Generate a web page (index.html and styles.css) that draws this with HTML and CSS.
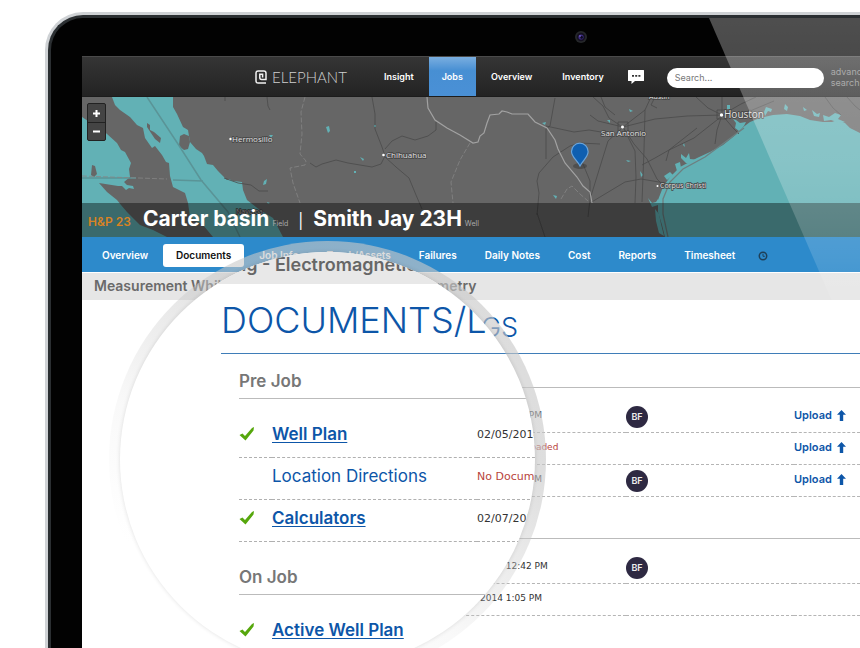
FILE: index.html
```html
<!DOCTYPE html>
<html lang="en">
<head>
<meta charset="utf-8">
<title>Elephant – Documents</title>
<link rel="stylesheet" href="styles.css">
</head>
<body>
<div class="laptop">
  <div class="bezel">
    <svg class="camera" width="14" height="14" viewBox="0 0 14 14" aria-hidden="true">
      <circle cx="7" cy="7" r="6" fill="#25272a"/><circle cx="7" cy="7" r="4.2" fill="#14101f"/>
      <circle cx="7" cy="7" r="2.6" fill="#3b2a80"/><circle cx="7.6" cy="7.4" r="1.3" fill="#0d0a1c"/><circle cx="6" cy="6" r=".8" fill="#8a78d8"/>
    </svg>
    <div class="screen">
      <header class="topbar">
        <a class="brand" href="#">
          <svg width="12" height="14" viewBox="0 0 12 14" aria-hidden="true"><path d="M11 13H3.200Q1 13 1 10.800V3.200Q1 1 3.200 1H8.800Q11 1 11 3.200V9.500H6.600Q4.800 9.500 4.800 7.800V4.200H7.600V7.500" fill="none" stroke="#f2f2f2" stroke-width="1.500"/></svg>
          <span class="wordmark">ELEPHANT</span>
        </a>
        <nav class="mainnav">
          <a href="#">Insight</a>
          <a href="#" class="active">Jobs</a>
          <a href="#">Overview</a>
          <a href="#">Inventory</a>
        </nav>
        <button class="chat" aria-label="Messages">
          <svg width="18" height="16" viewBox="0 0 18 16"><path d="M1.500 1H16.500Q17 1 17 1.500V11.500Q17 12 16.500 12H8L4.500 15V12H1.500Q1 12 1 11.500V1.500Q1 1 1.500 1Z" fill="#fff"/><path d="M5 6.800h2M8.200 6.800h2M11.400 6.800h2" stroke="#333" stroke-width="1.800"/></svg>
        </button>
        <input class="search" type="search" placeholder="Search..." aria-label="Search">
        <a class="advanced" href="#">advanced<br>search</a>
      </header>

      <section class="map">
        <svg class="mapart" viewBox="82 97 778 140" preserveAspectRatio="xMinYMin slice" aria-hidden="true">
          <rect x="82" y="97" width="2000" height="600" fill="#666"/>
          <g fill="#62b1b5">
            <path d="M82 117L88 121 97 127 101 128 107 134 117 143 121 150 125 152 131 163 129 169 130 177 124 182 127 185 133 186 134 189 129 188 126 190 122 186 118 186 99 183 107 192 117 200 121 205 127 212 140 225 153 230 167 237H82Z"/>
            <path d="M112 97L115 105 120 110 130 117 137 125 143 128 145 138 152 148 155 146 162 155 166 162 169 163 170 176 173 187 185 193 188 203 190 217 203 225 213 237H283L273 218 260 210 247 200 243 190 242 182 233 181 229 179 227 180 218 171 213 165 207 164 204 156 202 153 196 149 190 142 188 130 183 127 177 114 173 107V97Z"/>
            <path d="M860 133L850 128 845 123 837 120 832 122 823 122 810 120 800 116 787 114 773 115 760 118 750 122 742 128 733 137 723 145 710 152 697 158 680 167 670 177 663 187 658 200 658 212 662 225 665 237H2000V133Z"/>
            <path d="M733 119l3 1 4 3 6-1-2 4-5 5-4-3 1-5zM681 154l5 4 3-5 1 6 10 1-8 4-6-1-5-5zM675 164l5-2 1 6-4 3zM664 176l6-4 3 3-6 5zM648 198l4 5 4-1 2-3v6l-6 2zM655 209l4 5 2 10 3 12-5-3-3-12zM766 107l6 2-1 3-3-1-3 5-1-4zM785 104l3 3-1 4-3-2zM803 107l4 3-3 1zM812 110l5 4 3-1-1 4-5-1zM823 115l6 2 6-4 6 2-3 4 7 3-5 1-9-3-7 1z"/>
            <path d="M326 127l3-1 1 5-2 2zM360 157l4 2-1 2zM354 171h2v2h-2zM374 125h2v2h-2zM542 123l4-1-1 3zM553 195l4 1-1 3zM264 181l3-2-1 5-3 1zM269 135h4l-2 3zM267 202l3 1-2 1zM626 160l5 1-3 1zM629 109l4 2-3 1zM607 120h3v3zM640 171l3 4-2 2zM727 105h3v4h-3zM684 143l1 4-2-2z"/>
          </g>
          <g fill="#666">
            <path d="M147 123l3 2v5l4 2 7 6-1 5-5-4-8-12zM180 136l4-2 5 2 1 6-2 7-4 1-5-4zM92 165l3 1 2 8-3 3-3-2z"/>
          </g>
          <g class="grid"><path d="M147 97L178 144 201 180 228 212 240 237M82 178h54M173 180l30 1"/></g>
          <g class="road">
            <path d="M267 97l1 9 2 4M225 97v4M224 178l14 5 13 2 8 6 9 0M372 97l3 17 0 15 7 18 3 9-4 8-9 3-24-4-12-3-14 4-6 3-6-4M385 157l11 10 13 11 7 17 6 14M385 149l7-8 10-5 13 4 13-4 8-6v-8M555 98l-5 28-4 3 0 30M546 126l14 3 14 3 15-2 12 2M600 144l-20-1-10 3-17 11-14 16-2 8 2 12-2 22M583 164l7 17 0 18-2 18M545 237l-8-24M593 97l10 9 6 12 12 8M623 127l9-7 13-10 6-13M623 127l32-8 32-3 35-1M623 127l-25-6-8-6M623 127l11 17 13 15 10 20 8 8M623 127l-15 14-9 29-8 26M623 127l12 24 1 26-1 26M590 203l35-21 16-3 24 4M642 165l13-7 14-8 25-12 28-22M669 150l28-22M669 150l-3 11M722 115l-14-7-12-11M722 115l0-18M722 115l19-11 15-7M722 115l12 14 5 5M722 115l-5 15-2 14M722 115l28-4 24-10M645 110l-1 40-2 52M655 97l-4 8 6 3M825 97l8 11 8 7M847 97l8 9 5 4M601 97l4 10 10 8"/>
            <path d="M717 110h10v9h-10zM618 122h10v10h-10z"/>
          </g>
          <path class="river dashed" d="M305 97l-4 15 1 22-2 20 6 7-1 4-15 3 3 15 7 20M470 143l-10 17-9 22 2 21M82 176l85 3M561 199l6-10 5-3 8 8 8 7"/>
          <path class="river" d="M427 97l1 11 7 12 12 8 13 7 13 8 5-1 2-6 4-3 3-10 3-8 9-1 3-3 5 1 5 2 10 0 6 0 7 8 12 6 8 12 3 9 7 14 12 14 6 9 7 6 2 11"/>
          <path class="shore" d="M744 128l-16 12-23 17-22 12-13 13-7 17 0 15 5 23"/>
          <g fill="#fff"><circle cx="230.500" cy="139" r="1.200"/><circle cx="383.500" cy="155" r="1.300"/><circle cx="622.500" cy="127" r="1.500"/><circle cx="721.500" cy="115" r="1.700"/><circle cx="657.500" cy="186" r="1"/></g>
          <g class="place">
            <text x="232" y="142">Hermosillo</text><text x="386" y="158">Chihuahua</text><text x="601" y="136">San Antonio</text>
            <text x="724" y="118" class="big">Houston</text><text x="660" y="188" class="small">Corpus Christi</text><text x="649" y="99" class="small">Austin</text><text x="236" y="214" class="small dim">Navojoa</text>
          </g>
          <ellipse cx="580" cy="166" rx="7" ry="3" fill="#333" opacity=".45"/>
          <path d="M580 166C577 160 571.500 157 571.500 151.500a8.300 8.300 0 0 1 16.600 0C588.100 157 583 160 580 166Z" fill="#0f5fb0" stroke="#6aa5dc" stroke-width="1.200"/>
        </svg>
        <div class="zoomer">
          <button aria-label="Zoom in"><svg width="9" height="9" viewBox="0 0 9 9"><path d="M1 4.500h7M4.500 1v7" stroke="#fff" stroke-width="2"/></svg></button>
          <button aria-label="Zoom out"><svg width="9" height="9" viewBox="0 0 9 9"><path d="M1 4.500h7" stroke="#fff" stroke-width="2"/></svg></button>
        </div>
        <div class="jobtitle">
          <span class="rig">H&amp;P 23</span>
          <strong>Carter basin</strong><small>Field</small>
          <span class="bar">|</span>
          <strong>Smith Jay 23H</strong><small>Well</small>
        </div>
      </section>

      <nav class="tabs">
        <a href="#">Overview</a>
        <a href="#" class="current">Documents</a>
        <a href="#">Job Info</a>
        <a href="#">Truck/Assets</a>
        <a href="#">Failures</a>
        <a href="#">Daily Notes</a>
        <a href="#">Cost</a>
        <a href="#">Reports</a>
        <a href="#">Timesheet</a>
        <a href="#" class="history" aria-label="History"><svg width="10" height="10" viewBox="0 0 10 10"><circle cx="5" cy="5" r="3.700" fill="none" stroke="#1f4058" stroke-width="1.500"/><path d="M5 2.800V5.300H6.800" fill="none" stroke="#1f4058"/></svg></a>
      </nav>
      <div class="band">Measurement While Drilling - Electromagnetic Telemetry</div>

      <main class="content">
        <h1>DOCUMENTS/LOGS</h1>
        <section>
          <table>
            <colgroup><col class="c-name"><col class="c-date"><col class="c-user"><col></colgroup>
            <tr><td></td><td>02/05/2014 9:20 PM</td><td><span class="avatar">BF</span></td><td><a class="upload" href="#">Upload <svg width="9" height="11" viewBox="0 0 9 11"><path d="M4.500 0L9 4.800H6.200V11H2.800V4.800H0Z" fill="#0d56a8"/></svg></a></td></tr>
            <tr><td></td><td class="missing">No Document Uploaded</td><td></td><td><a class="upload" href="#">Upload <svg width="9" height="11" viewBox="0 0 9 11"><path d="M4.500 0L9 4.800H6.200V11H2.800V4.800H0Z" fill="#0d56a8"/></svg></a></td></tr>
            <tr><td></td><td>02/07/2014 3:15 PM</td><td><span class="avatar">BF</span></td><td><a class="upload" href="#">Upload <svg width="9" height="11" viewBox="0 0 9 11"><path d="M4.500 0L9 4.800H6.200V11H2.800V4.800H0Z" fill="#0d56a8"/></svg></a></td></tr>
          </table>
        </section>
        <section>
          <table>
            <colgroup><col class="c-name"><col class="c-date"><col class="c-user"><col></colgroup>
            <tr><td></td><td>02/10/2014 12:42 PM</td><td><span class="avatar">BF</span></td><td></td></tr>
            <tr><td></td><td>02/12/2014 1:05 PM</td><td></td><td></td></tr>
          </table>
        </section>
      </main>

      <aside class="lens">
        <div class="lensview">
          <div class="lensband">Drilling - Electromagnetic Telemetry</div>
          <div class="lenstitle">DOCUMENTS/LOGS</div>
          <section>
            <h3>Pre Job</h3>
            <table>
              <colgroup><col class="l-tick"><col class="l-name"><col></colgroup>
              <tr><td><svg class="tick" width="16" height="14" viewBox="0 0 16 14"><path d="M.5 8L3.500 6.500 6 9 13 1 15 0 14.500 3.500 6.500 13.500Z" fill="#56a70c"/></svg></td><td><a class="done" href="#">Well Plan</a></td><td>02/05/2014</td></tr>
              <tr><td></td><td><a href="#">Location Directions</a></td><td class="missing">No Document</td></tr>
              <tr><td><svg class="tick" width="16" height="14" viewBox="0 0 16 14"><path d="M.5 8L3.500 6.500 6 9 13 1 15 0 14.500 3.500 6.500 13.500Z" fill="#56a70c"/></svg></td><td><a class="done" href="#">Calculators</a></td><td>02/07/2014</td></tr>
            </table>
          </section>
          <section>
            <h3>On Job</h3>
            <table>
              <colgroup><col class="l-tick"><col class="l-name"><col></colgroup>
              <tr><td><svg class="tick" width="16" height="14" viewBox="0 0 16 14"><path d="M.5 8L3.500 6.500 6 9 13 1 15 0 14.500 3.500 6.500 13.500Z" fill="#56a70c"/></svg></td><td><a class="done" href="#">Active Well Plan</a></td><td></td></tr>
            </table>
          </section>
        </div>
      </aside>
    </div>
    <div class="glare"></div>
  </div>
</div>
</body>
</html>
```
FILE: styles.css
```css
* { box-sizing: border-box; }
body {
  margin: 0;
  height: 100vh;
  overflow: hidden;
  background: #fff;
  font-family: Inter, "Open Sans", sans-serif;
}
a { color: inherit; text-decoration: none; }
button { border: 0; padding: 0; background: none; display: flex; align-items: center; justify-content: center; }
h1, h3 { margin: 0; }

/* laptop frame */
.laptop {
  margin: 12px 0 0 45px;
  min-height: 100vh;
  padding: 3px 0 0 3px;
  border-radius: 38px 0 0 0;
  background: #cfd2d5;
  display: flex;
}
.bezel {
  position: relative;
  flex: 1;
  min-width: 0;
  border: solid #2b2f32;
  border-width: 3px 0 0 3px;
  border-radius: 35px 0 0 0;
  padding: 38px 0 0 31px;
  background: #020202;
  display: flex;
}
.camera { position: absolute; left: 523px; top: 12px; }
.screen {
  position: relative;
  flex: 1;
  min-width: 0;
  background: #fff;
}
.glare {
  position: absolute;
  inset: 0 0 auto 0;
  height: 283px;
  background: linear-gradient(rgba(255,255,255,.3), rgba(255,255,255,.24) 50%, rgba(255,255,255,.14) 85%, rgba(255,255,255,.08));
  clip-path: polygon(658px 0, 100% 0, 100% 100%, 781px 100%);
  pointer-events: none;
}

/* top bar */
.topbar {
  display: flex;
  align-items: center;
  height: 41px;
  overflow: hidden;
  border-top: 1px solid #4a4a4a;
  border-bottom: 1px solid #1c1c1c;
  background: linear-gradient(#353535, #232323);
  color: #fff;
}
.brand { display: flex; align-items: center; gap: 5px; flex: none; width: 287px; padding-left: 173px; }
.brand svg { flex: none; }
.wordmark { font: 300 15px/20px Lato, "Liberation Sans", sans-serif; color: #d0d0d0; }
.mainnav { display: flex; align-self: stretch; flex: none; }
.mainnav a { display: flex; align-items: center; padding: 0 15px; font-size: 9px; font-weight: 600; }
.mainnav .active { background: linear-gradient(#7aaee0, #478fd3 35%, #4a90d6); padding: 0 13px; }
.chat { flex: none; margin: 0 22px 0 8px; }
.search {
  appearance: none;
  flex: none;
  width: 157px;
  height: 20px;
  margin-top: 2px;
  border: 0;
  border-radius: 10px;
  padding: 0 8px;
  background: #fff;
  font: 9px/20px Inter, sans-serif;
}
.search::placeholder { color: #777; opacity: 1; }
.advanced { flex: none; margin-left: 7px; font-size: 9px; line-height: 11px; color: #8d8d8d; }

/* map */
.map { position: relative; height: 140px; overflow: hidden; background: #666; }
.mapart { display: block; width: 100%; height: 100%; }
.mapart .road { fill: none; stroke: #4a4a4a; stroke-width: .8; }
.mapart .grid { fill: none; stroke: #5a9497; stroke-width: 1.5; }
.mapart .river { fill: none; stroke: #a2a2a2; stroke-width: 1.2; }
.mapart .dashed { stroke: #858585; stroke-width: .8; stroke-dasharray: 5 2; }
.mapart .shore { fill: none; stroke: #6d7f80; stroke-width: 1.3; }
.place { font: 8px "Open Sans", sans-serif; fill: #e2e2e2; stroke: #444; stroke-width: 1.5px; paint-order: stroke; }
.place .big { font-size: 10px; }
.place .small { font-size: 7px; }
.place .dim { fill: #bbb; }
.zoomer { position: absolute; left: 5px; top: 6px; width: 19px; border: 1px solid #222; border-radius: 2px; background: #444; }
.zoomer button { width: 100%; height: 18px; }
.zoomer button + button { border-top: 1px solid #222; }
.jobtitle {
  position: absolute;
  inset: auto 0 0 0;
  height: 34px;
  padding: 0 6px;
  background: rgba(0,0,0,.4);
  color: #fff;
  font-size: 20px;
  line-height: 32px;
  white-space: nowrap;
  display: flex;
  align-items: baseline;
}
.rig { width: 55px; font-size: 12px; font-weight: 600; color: #d98324; }
.jobtitle strong { font-size: 21px; font-weight: 700; }
.jobtitle small { margin-left: 3px; font-size: 7px; color: #aaa; }
.bar { margin: 0 10px; font-size: 15px; }

/* tabs */
.tabs {
  display: flex;
  align-items: center;
  height: 35px;
  padding: 2px 6px 0;
  background: #2d8acb;
  color: #fff;
  font-size: 10px;
  font-weight: 600;
  white-space: nowrap;
}
.tabs a { padding: 0 14px; line-height: 23px; display: flex; align-items: center; }
.tabs .current { margin: 0 1px; padding: 0 13px; border-radius: 3px; background: #fff; color: #111; }
.tabs .history { padding: 0 9px; }
.band {
  height: 28px;
  border-top: 1px solid #fff;
  padding-left: 12px;
  background: #e6e6e6;
  color: #6a6a6a;
  font-size: 14px;
  font-weight: 600;
  line-height: 25px;
  white-space: nowrap;
}

/* documents list */
.content { margin-left: 139px; }
.content h1 { padding: 3px 0 0 41px; border-bottom: 1px solid #3f7db8; font-size: 27px; font-weight: 300; line-height: 50px; color: #0d56a8; }
.content section { padding-top: 33px; }
.content section + section { padding-top: 41px; }
table { width: 100%; table-layout: fixed; border-collapse: separate; border-spacing: 0; }
td { padding: 0; white-space: nowrap; }
.content table { padding-top: 13px; border-top: 1px solid #bbb; font: 9px "DejaVu Sans", sans-serif; color: #333; }
.content td { height: 32px; padding-bottom: 3px; border-bottom: 1px dashed #b5b5b5; }
.c-name { width: 230px; }
.c-date { width: 175px; }
.c-user { width: 168px; }
.missing { color: #b8443c; }
.avatar {
  display: block;
  width: 22px;
  height: 22px;
  margin-top: 4px;
  border-radius: 50%;
  background: #2e2942;
  color: #eee;
  font: 600 9px/22px Inter, sans-serif;
  text-align: center;
}
.upload { display: flex; align-items: center; gap: 5px; font: 600 11px/14px Inter, sans-serif; color: #0d56a8; }

/* magnifier */
.lens {
  position: absolute;
  left: 27px;
  top: 185px;
  width: 437px;
  height: 437px;
  padding: 11px;
  border-radius: 50%;
  background: linear-gradient(35deg, rgba(205,205,205,0) 20%, rgba(205,205,205,.12) 38%, rgba(200,200,200,.6) 68%, rgba(200,200,200,.65));
}
.lensview {
  width: 100%;
  height: 100%;
  overflow: hidden;
  border-radius: 50%;
  background: #fff;
  box-shadow: 0 0 4px rgba(0,0,0,.12);
}
.lensband { height: 32px; padding-left: 76px; background: #e8e8e8; color: #666; font-size: 18px; font-weight: 600; line-height: 25px; white-space: nowrap; }
.lenstitle { margin-left: 101px; padding-top: 3px; border-bottom: 1px solid #3f7db8; color: #0d56a8; font-size: 36px; font-weight: 300; line-height: 66px; }
.lens section { margin-left: 119px; }
.lens section + section { margin-top: 8px; }
.lens h3 { padding-top: 10px; border-bottom: 1px solid #bbb; font-size: 17px; font-weight: 600; line-height: 34px; color: #777; }
.lens table { margin-top: 17px; font: 11px "DejaVu Sans", sans-serif; color: #333; }
.lens td { height: 42px; padding-bottom: 5px; border-bottom: 1px dashed #b0b0b0; }
.l-tick { width: 33px; }
.l-name { width: 205px; }
.lens a { font: 17px Inter, sans-serif; color: #0d56a8; }
.lens .done { font-weight: 600; text-decoration: underline; text-underline-offset: 2px; }
.tick { display: block; }
```
